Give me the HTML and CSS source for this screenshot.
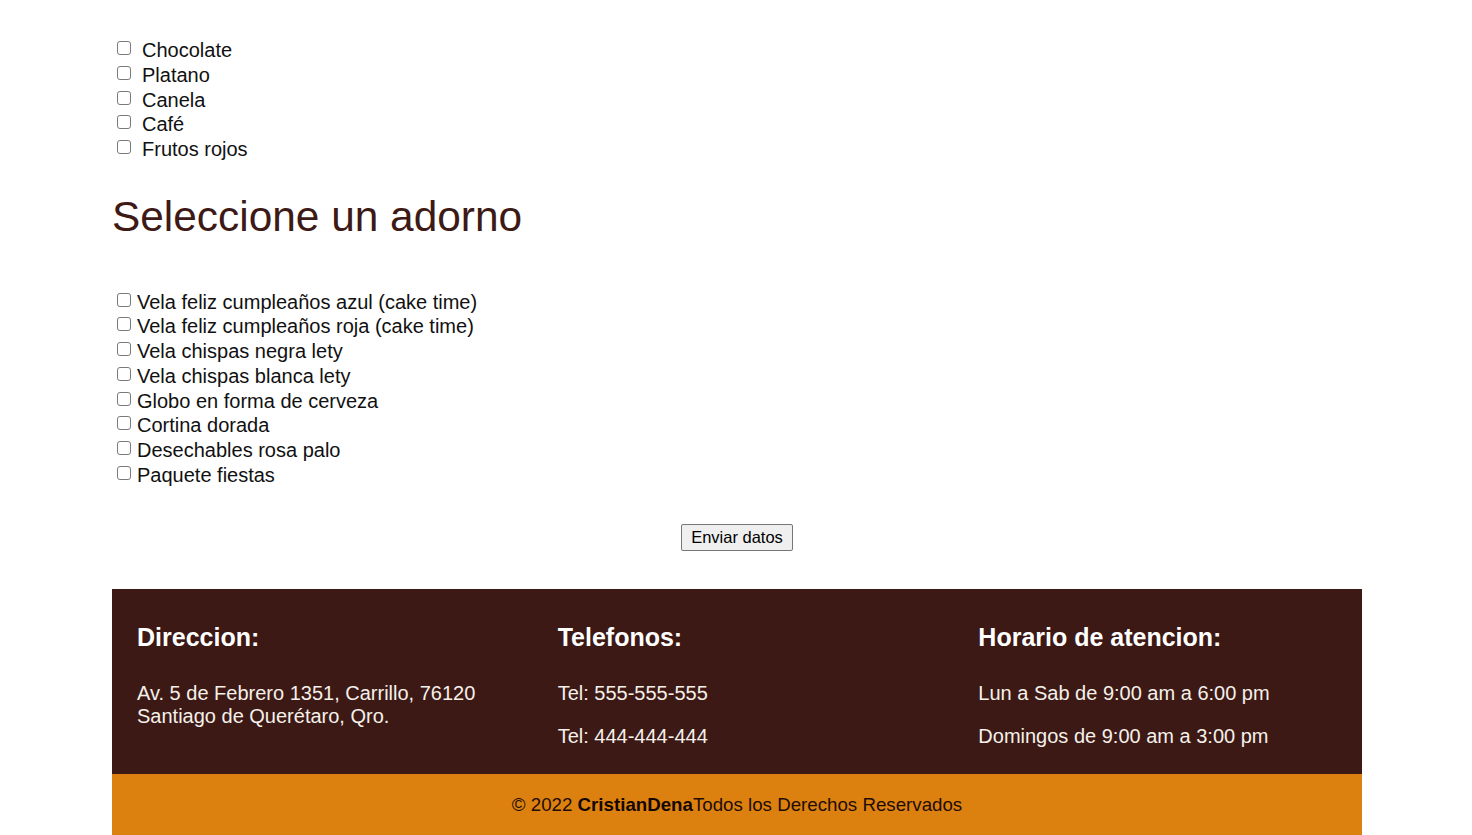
FILE: index.html
```html
<!DOCTYPE html>
<html lang="es">
<head>
<meta charset="utf-8">
<title>Pedido</title>
<link rel="stylesheet" href="styles.css">
</head>
<body>
<div class="page">
  <form class="form">
    <div class="options options-flavor">
      <label class="option"><input type="checkbox" class="check check-wide">Chocolate</label>
      <label class="option"><input type="checkbox" class="check check-wide">Platano</label>
      <label class="option"><input type="checkbox" class="check check-wide">Canela</label>
      <label class="option"><input type="checkbox" class="check check-wide">Café</label>
      <label class="option"><input type="checkbox" class="check check-wide">Frutos rojos</label>
    </div>

    <h2 class="section-title">Seleccione un adorno</h2>

    <div class="options options-decor">
      <label class="option"><input type="checkbox" class="check">Vela feliz cumpleaños azul (cake time)</label>
      <label class="option"><input type="checkbox" class="check">Vela feliz cumpleaños roja (cake time)</label>
      <label class="option"><input type="checkbox" class="check">Vela chispas negra lety</label>
      <label class="option"><input type="checkbox" class="check">Vela chispas blanca lety</label>
      <label class="option"><input type="checkbox" class="check">Globo en forma de cerveza</label>
      <label class="option"><input type="checkbox" class="check">Cortina dorada</label>
      <label class="option"><input type="checkbox" class="check">Desechables rosa palo</label>
      <label class="option"><input type="checkbox" class="check">Paquete fiestas</label>
    </div>

    <div class="actions">
      <button type="button" class="submit">Enviar datos</button>
    </div>
  </form>

  <footer class="footer">
    <div class="footer-main">
      <div class="footer-col">
        <h3 class="footer-title">Direccion:</h3>
        <p class="footer-text">Av. 5 de Febrero 1351, Carrillo, 76120<br>Santiago de Querétaro, Qro.</p>
      </div>
      <div class="footer-col">
        <h3 class="footer-title">Telefonos:</h3>
        <p class="footer-text">Tel: 555-555-555</p>
        <p class="footer-text">Tel: 444-444-444</p>
      </div>
      <div class="footer-col">
        <h3 class="footer-title">Horario de atencion:</h3>
        <p class="footer-text">Lun a Sab de 9:00 am a 6:00 pm</p>
        <p class="footer-text">Domingos de 9:00 am a 3:00 pm</p>
      </div>
    </div>
    <div class="footer-bottom">
      <p class="copyright">© 2022 <strong>CristianDena</strong>Todos los Derechos Reservados</p>
    </div>
  </footer>
</div>
</body>
</html>
```

FILE: styles.css
```css
html, body {
  margin: 0;
  padding: 0;
  background: #ffffff;
}

body {
  font-family: "Liberation Sans", Arial, sans-serif;
  color: #000000;
}

.page {
  width: 1250px;
  margin: 0 110px 0 112px;
}

.form {
  padding-top: 38px;
}

.options {
  font-size: 20px;
}

.option {
  display: block;
  line-height: 24.75px;
  height: 24.75px;
  color: #111111;
}

.check {
  appearance: none;
  -webkit-appearance: none;
  box-sizing: border-box;
  width: 14px;
  height: 14px;
  margin: 0 6px 2px 5px;
  vertical-align: baseline;
  background: #ffffff;
  border: 1px solid #7a7a7a;
  border-radius: 3px;
}

.check-wide {
  margin-right: 11px;
}

.section-title {
  font-size: 42.4px;
  font-weight: normal;
  line-height: 48px;
  color: #3d1a15;
  margin: 31.4px 0 48.5px 0;
}

.actions {
  display: flex;
  justify-content: center;
  margin-top: 36.3px;
}

.submit {
  font-family: "Liberation Sans", Arial, sans-serif;
  font-size: 16.5px;
  line-height: 19px;
  height: 27px;
  padding: 3px 9.6px;
  color: #000000;
  background: #efefef;
  border: 1px solid #767676;
  border-radius: 2px;
  box-sizing: border-box;
}

.footer {
  margin-top: 38px;
}

.footer-main {
  background: #3c1914;
  padding: 33.8px 25px 25.5px 25px;
  display: grid;
  grid-template-columns: repeat(3, 1fr);
  column-gap: 62px;
}

.footer-title {
  margin: 0 0 31px 0;
  font-size: 25px;
  font-weight: bold;
  line-height: 28.75px;
  color: #ffffff;
}

.footer-text {
  margin: 0;
  font-size: 20px;
  line-height: 23px;
  color: #f5f0ea;
}

.footer-text + .footer-text {
  margin-top: 20px;
}

.footer-bottom {
  background: #dc810f;
  padding: 19.6px 0;
  text-align: center;
}

.copyright {
  margin: 0;
  font-size: 18.72px;
  line-height: 21.5px;
  color: #1e0c05;
}

.copyright strong {
  font-weight: bold;
  color: #140703;
}
```
